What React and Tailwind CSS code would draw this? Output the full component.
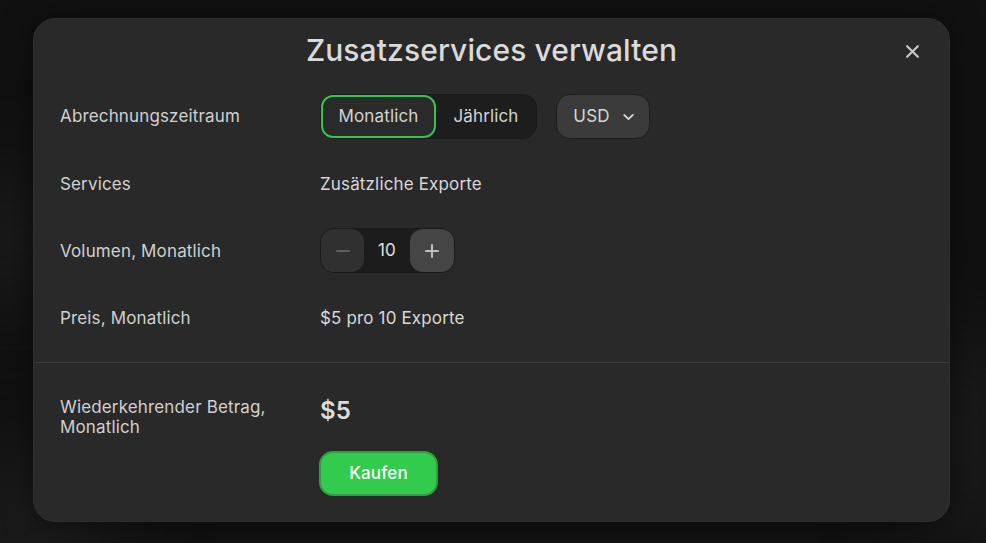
import { useState } from 'react'

export default function App() {
  const [period, setPeriod] = useState('monthly')
  const [volume, setVolume] = useState(10)

  return (
    <div
      className="relative w-[986px] h-[543px] overflow-hidden bg-[#111111] pt-[18px] pl-[33px] tracking-[0.15px]"
      style={{ fontFamily: 'Inter, "Noto Sans", sans-serif' }}
    >
      {/* background glow */}
      <div className="absolute -left-[60px] top-[170px] w-[140px] h-[140px] rounded-full bg-[#1a1a1a] blur-2xl" />
      <div className="absolute -left-[40px] top-[440px] w-[160px] h-[160px] rounded-full bg-[#1b1b1b] blur-2xl" />
      <div className="absolute right-[-40px] top-[330px] w-[120px] h-[220px] rounded-full bg-[#1a1a1a] blur-2xl" />

      <div className="relative w-[917px] h-[504px] rounded-[22px] bg-[#292929] border border-[#2f2f2f] shadow-[0_0_30px_rgba(0,0,0,0.5)]">
        {/* Header */}
        <div className="relative h-[75px] pt-[12px] text-center">
          <h1 className="text-[30px] leading-[38px] font-medium text-[#dadada] tracking-[0.1px]">
            Zusatzservices verwalten
          </h1>
          <button className="absolute right-[29px] top-[24px] w-[16px] h-[16px] flex items-center justify-center text-[#c8c8c8]">
            <svg width="15" height="15" viewBox="0 0 14 14" fill="none" stroke="currentColor" strokeWidth="2" strokeLinecap="round">
              <path d="M2 2L12 12M12 2L2 12" />
            </svg>
          </button>
        </div>

        {/* Rows */}
        <div className="flex flex-col gap-[22px] px-[26px] pb-[22px] border-b border-[#3a3a3a]">
          <div className="flex items-center h-[45px]">
            <div className="w-[260px] pt-[1px] text-[17px] text-[#d0d0d0]">Abrechnungszeitraum</div>
            <div className="flex items-center gap-[19px]">
              <div className="flex h-[45px] w-[217px] rounded-[14px] bg-[#1d1d1d] border border-[#1a1a1a]">
                <button
                  onClick={() => setPeriod('monthly')}
                  className={`w-[115px] h-full rounded-[12px] text-[17px] ${period === 'monthly' ? 'border-2 border-[#34c34d] bg-[#2a2a2a] text-[#d4d4d4]' : 'text-[#d4d4d4]'}`}
                >
                  Monatlich
                </button>
                <button
                  onClick={() => setPeriod('yearly')}
                  className={`flex-1 h-full rounded-[12px] text-[17px] ${period === 'yearly' ? 'border-2 border-[#34c34d] bg-[#2a2a2a] text-[#d4d4d4]' : 'text-[#d4d4d4]'}`}
                >
                  Jährlich
                </button>
              </div>
              <button className="flex items-center justify-center gap-[12px] pl-[2px] h-[45px] w-[94px] rounded-[14px] bg-[#3b3b3b] border border-[#1e1e1e] text-[17px] text-[#d6d6d6]">
                USD
                <svg width="13" height="13" viewBox="0 0 12 12" fill="none" stroke="currentColor" strokeWidth="1.7" strokeLinecap="round" strokeLinejoin="round">
                  <path d="M2 4.5L6 8.5L10 4.5" />
                </svg>
              </button>
            </div>
          </div>

          <div className="flex items-center h-[45px] pt-[2px]">
            <div className="w-[260px] text-[17px] text-[#d0d0d0]">Services</div>
            <div className="text-[17px] text-[#d8d8d8]">Zusätzliche Exporte</div>
          </div>

          <div className="flex items-center h-[45px]">
            <div className="w-[260px] pt-[3px] text-[17px] text-[#d0d0d0]">Volumen, Monatlich</div>
            <div className="flex items-center h-[45px] w-[135px] rounded-[14px] bg-[#1c1c1c] border border-[#1a1a1a]">
              <button
                onClick={() => setVolume(Math.max(10, volume - 10))}
                className="w-[43px] h-[43px] rounded-[13px] bg-[#303030] flex items-center justify-center text-[#5f5f5f]"
              >
                <svg width="16" height="16" viewBox="0 0 16 16" fill="none" stroke="currentColor" strokeWidth="2" strokeLinecap="round">
                  <path d="M2 8H14" />
                </svg>
              </button>
              <div className="flex-1 pt-[1px] text-center text-[17px] text-[#e0e0e0]">{volume}</div>
              <button
                onClick={() => setVolume(volume + 10)}
                className="w-[44px] h-[43px] rounded-[13px] bg-[#454545] flex items-center justify-center text-[#bdbdbd]"
              >
                <svg width="16" height="16" viewBox="0 0 16 16" fill="none" stroke="currentColor" strokeWidth="2" strokeLinecap="round">
                  <path d="M2 8H14M8 2V14" />
                </svg>
              </button>
            </div>
          </div>

          <div className="flex items-center h-[45px] pt-[3px]">
            <div className="w-[260px] text-[17px] text-[#d0d0d0]">Preis, Monatlich</div>
            <div className="text-[17px] text-[#d8d8d8]">$5 pro {volume} Exporte</div>
          </div>
        </div>

        {/* Footer */}
        <div className="flex items-start px-[26px] pt-[32px]">
          <div className="w-[260px] mt-[2px] text-[17px] leading-[20px] text-[#d0d0d0]">
            Wiederkehrender Betrag,
            <br />
            Monatlich
          </div>
          <div className="flex flex-col items-start">
            <div className="text-[24px] leading-[32px] font-semibold text-[#dcdcdc]">${volume / 2}</div>
            <button className="mt-[24px] -ml-[1px] w-[119px] h-[45px] rounded-[14px] bg-[#33cb4e] border-2 border-[#2f9d41] text-[17px] font-medium text-white">
              Kaufen
            </button>
          </div>
        </div>
      </div>
    </div>
  )
}
